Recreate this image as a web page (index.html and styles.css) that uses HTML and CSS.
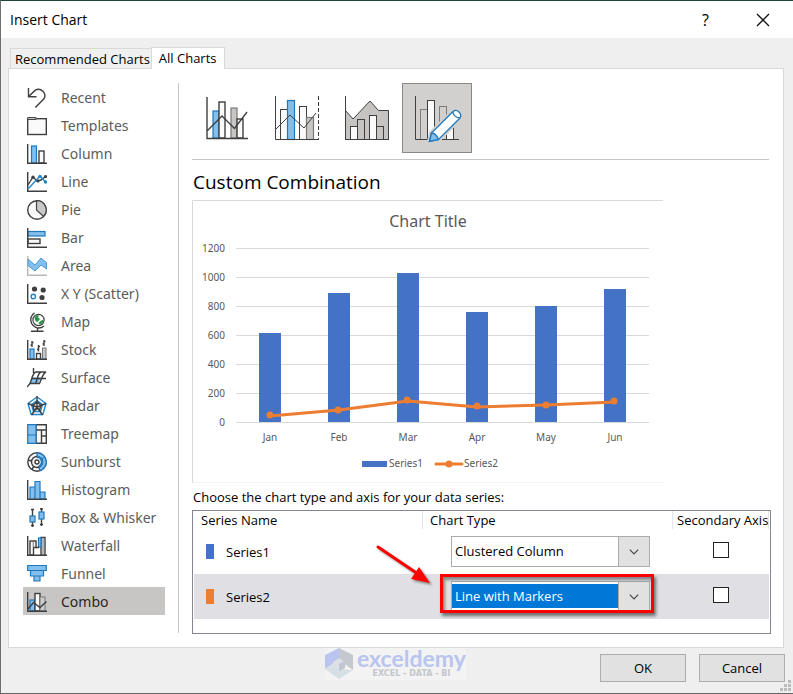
FILE: index.html
```html
<!DOCTYPE html>
<html lang="en">
<head>
  <meta charset="UTF-8">
  <meta name="viewport" content="width=device-width, initial-scale=1.0">
  <title>Insert Chart</title>
  <link rel="stylesheet" href="styles.css">
</head>
<body>

<div class="dialog">
  <header class="titlebar">
    <h1>Insert Chart</h1>
    <button class="title-button" aria-label="Help">?</button>
    <button class="title-button" aria-label="Close">
      <svg width="14" height="14" viewBox="0 0 14 14"><path d="M1 1L13 13M13 1L1 13" fill="none" stroke="#111" stroke-width="1.3"/></svg>
    </button>
  </header>

  <div class="tabs" role="tablist">
    <button class="tab" role="tab">Recommended Charts</button>
    <button class="tab tab-active" role="tab" aria-selected="true">All Charts</button>
  </div>

  <main class="panel">
    <nav class="chart-types">
      <button class="type">
        <svg class="icon" viewBox="0 0 20 20"><path class="ln" d="M1.500 0V8.800H9.500M1.700 8.600L8 2.400A6.300 6.300 0 0 1 16.800 11L8.300 19.500"/></svg>
        Recent
      </button>
      <button class="type">
        <svg class="icon" viewBox="0 0 20 20"><rect class="ln wh" x=".7" y="2.700" width="18.600" height="15.800"/><path d="M.7 1.500H9V3.500H.7z" fill="#c8c8c8" stroke="#444"/></svg>
        Templates
      </button>
      <button class="type">
        <svg class="icon" viewBox="0 0 20 20"><rect class="bl" x="4.500" y="2" width="5" height="17"/><rect class="ln wh" x="12" y="7" width="5" height="12"/><path class="ln" d="M.7 0V19.300H20"/></svg>
        Column
      </button>
      <button class="type">
        <svg class="icon" viewBox="0 0 20 20"><path class="ln" d="M.7 0V19.300H20M1 13L6 5L10 9L14 8L18.500 4.500"/><circle class="dk" cx="6" cy="5.200" r="1.700"/><circle class="dk" cx="18.500" cy="4.500" r="1.600"/><path class="bs" d="M1 17L13 4L19 10.500"/><circle class="bf" cx="13" cy="4.500" r="1.700"/><circle class="dk" cx="11" cy="9" r="1.600"/><circle class="bf" cx="18.500" cy="10" r="1.700"/></svg>
        Line
      </button>
      <button class="type">
        <svg class="icon" viewBox="0 0 20 20"><circle class="ln wh" cx="10" cy="10" r="9.300"/><path d="M9.500 .7A9.300 9.300 0 0 1 16.500 16.500L9.500 10z" fill="#c8c8c8" stroke="#444" stroke-width="1.200"/></svg>
        Pie
      </button>
      <button class="type">
        <svg class="icon" viewBox="0 0 20 20"><rect class="bl" x="1" y="3.500" width="17" height="4.500"/><rect class="ln wh" x="1" y="11" width="12" height="4.500"/><path class="ln" d="M.7 0V19.300H20"/></svg>
        Bar
      </button>
      <button class="type">
        <svg class="icon" viewBox="0 0 20 20"><path d="M.7 0V19.300H20" fill="none" stroke="#b8b8b8" stroke-width="1.400"/><path d="M1 3L8 9L14 2L19.500 6.500V13L14 9L8 15L1 9.500z" fill="#83beec" stroke="#4f9cd8"/></svg>
        Area
      </button>
      <button class="type">
        <svg class="icon" viewBox="0 0 20 20"><path class="ln" d="M.7 0V19.300H20"/><circle class="dk" cx="7.500" cy="5" r="2.600"/><circle class="dk" cx="16.200" cy="6" r="2.600"/><circle class="dk" cx="15" cy="13.500" r="2.600"/><circle cx="6.300" cy="12.500" r="2.200" fill="#fff" stroke="#1f86cc" stroke-width="1.400"/></svg>
        X Y (Scatter)
      </button>
      <button class="type">
        <svg class="icon" viewBox="0 0 20 20"><circle class="wh" cx="11.500" cy="8" r="5.600" stroke="#444" stroke-width="1.200"/><path d="M7.500 6L9 3.500L12 3L11 5.500L13 7L10.500 10L8.500 9zM13.500 9L16.500 7.500L16 10.500L13 12.800L11.500 11z" fill="#2b9148"/><path class="ln" d="M7.500 .8A8.200 8.200 0 0 0 14.500 15.500L17 14M10.500 16V19M4 19.200H16.500"/></svg>
        Map
      </button>
      <button class="type">
        <svg class="icon" viewBox="0 0 20 20"><rect class="bl" x="3" y="9" width="4" height="10"/><rect class="ln wh" x="9.500" y="13.500" width="4" height="5.500"/><rect x="15.500" y="8" width="3.500" height="11" fill="#c8c8c8" stroke="#777"/><path class="ln" d="M.7 0V19.300H20M5 1V7M5 2.500H6.500M3.500 5H5M11.500 5V11.500M11.500 6.500H13M10 9.500H11.500M17 0V6M17 1.500H18.500M15.500 4H17"/></svg>
        Stock
      </button>
      <button class="type">
        <svg class="icon" viewBox="0 0 20 20"><path d="M5 9.500H14L11 16H2z" fill="#83beec"/><path class="ln" d="M6.500 0V5M0 19L3 15.500C5 12 5 5 9 4H19C16 5 15 10 12.500 15.500H3M8.500 15.500C11 11 10 6 14 4M5 10.500H19"/></svg>
        Surface
      </button>
      <button class="type">
        <svg class="icon" viewBox="0 0 20 20"><path class="bs" d="M10 1L19 7.500L15.800 18.500H4.200L1 7.500zM10 4.500L15.500 8.500L13.500 15.500H6.500L4.500 8.500z"/><path class="ln" d="M10 0V11M10 11L19 7.500M10 11L1 7.500M10 11L4.500 19M10 11L15.500 19M10 5.500L13.800 9.200L12.500 14.500L10 12.500L7.200 15L6 9.500z"/></svg>
        Radar
      </button>
      <button class="type">
        <svg class="icon" viewBox="0 0 20 20"><path class="ln wh" d="M9 .7H19.300V19.300H9zM9 6H19M14.500 6V19M14.500 12H19"/><path class="bl" d="M.7 .7H9V19.300H.7zM.7 11H9"/></svg>
        Treemap
      </button>
      <button class="type">
        <svg class="icon" viewBox="0 0 20 20"><circle class="ln wh" cx="10" cy="10" r="9.200"/><path d="M10 .8A9.200 9.200 0 0 1 13 18.700L11.500 14.500A5 5 0 0 0 10 5z" fill="#83beec" stroke="#1f78bd" stroke-width="1.300"/><circle class="ln" cx="10" cy="10" r="5.500"/><path class="bs" d="M10 4.500A5.500 5.500 0 0 1 12 15M14.500 7L18 5"/><circle class="ln wh" cx="10" cy="10" r="2"/><path class="ln" d="M1 8L4.700 9M5 17L7 14.500"/></svg>
        Sunburst
      </button>
      <button class="type">
        <svg class="icon" viewBox="0 0 20 20"><path class="bl" d="M3 19V7H8V19M8 19V1.500H13V19M13 12H18V19H13z"/><path class="ln" d="M.7 0V19.300H20"/></svg>
        Histogram
      </button>
      <button class="type">
        <svg class="icon" viewBox="0 0 20 20"><path class="ln" d="M5.500 1V19M14.500 0V18M4 1.500H7M4 17.500H7M13 1H16M13 16.500H16"/><rect class="bl" x="3" y="8" width="5" height="6"/><rect class="bl" x="12" y="4" width="5" height="7"/></svg>
        Box &amp; Whisker
      </button>
      <button class="type">
        <svg class="icon" viewBox="0 0 20 20"><rect class="ln wh" x="3" y="5" width="3.500" height="14"/><path class="ln wh" d="M6.500 5H9V11.500H6.500M14 1.500H18V19H14z"/><rect class="bl" x="11.500" y="2" width="2.500" height="9"/><path d="M15 2H17V19H15z" fill="#b5b5b5"/><path class="ln" d="M9 11.500H12M.7 0V19.300H20"/></svg>
        Waterfall
      </button>
      <button class="type">
        <svg class="icon" viewBox="0 0 20 20"><path class="bl" d="M.7 1.500H19.300V6.500H.7zM3.500 6.500H16.500V12H3.500zM7 12H13V17H7z"/></svg>
        Funnel
      </button>
      <button class="type type-selected">
        <svg class="icon" viewBox="0 0 20 20"><rect class="bl" x="3" y="8" width="5" height="11"/><rect class="ln wh" x="8" y="1.500" width="5" height="17.500"/><rect x="13" y="5" width="5" height="14" fill="#ccc" stroke="#777"/><path class="ln" d="M.7 0V19.300H20M1 17L6.500 10.500L13 15.500L19.500 9.500"/></svg>
        Combo
      </button>
    </nav>

    <section class="details">
      <div class="subtypes">
        <button class="subtype" aria-label="Clustered Column - Line">
          <svg viewBox="0 0 70 70">
            <rect class="bl" x="21" y="28" width="6" height="27"/>
            <rect class="ln wh" x="27" y="19" width="6" height="36"/>
            <rect class="gr" x="39" y="25" width="6" height="30"/>
            <rect class="ln wh" x="45" y="36" width="6" height="19"/>
            <path class="ln" d="M15 14V55.500H56M15 48L30 33L42.500 45.500L55 29"/>
          </svg>
        </button>
        <button class="subtype" aria-label="Clustered Column - Line on Secondary Axis">
          <svg viewBox="0 0 70 70">
            <rect class="ln thin wh" x="18.500" y="26.500" width="7" height="30"/>
            <rect class="bl" x="25.500" y="17.500" width="7" height="39"/>
            <rect class="ln thin wh" x="37.500" y="23.500" width="7" height="33"/>
            <rect class="gr" x="44.500" y="34.500" width="7" height="22"/>
            <path class="ln thin" d="M13.500 13V56.500H57M14 46L28 32L42 45L54 30"/>
            <path class="ln thin" stroke-dasharray="4 2" d="M56.500 13V56"/>
          </svg>
        </button>
        <button class="subtype" aria-label="Stacked Area - Clustered Column">
          <svg viewBox="0 0 70 70">
            <path class="ln thin area" d="M13.500 27.500L21 36L38 18L46.500 27.500H56.500V56.500H13.500z"/>
            <rect class="ln thin wh" x="18.500" y="43.500" width="7" height="13"/>
            <rect class="ln thin" x="25.500" y="36.500" width="7" height="20"/>
            <rect class="ln thin wh" x="37.500" y="32.500" width="7" height="24"/>
            <rect class="ln thin" x="44.500" y="43.500" width="7" height="13"/>
            <path class="ln thin" d="M13.500 13V56.500H57"/>
          </svg>
        </button>
        <button class="subtype subtype-selected" aria-label="Custom Combination">
          <svg viewBox="0 0 70 70">
            <rect class="ln thin faded" x="18.500" y="26.500" width="7" height="30"/>
            <rect class="ln thin wh" x="25.500" y="17.500" width="7" height="39"/>
            <rect class="ln thin faded" x="37.500" y="23.500" width="7" height="33"/>
            <rect class="ln thin wh" x="44.500" y="43.500" width="7" height="13"/>
            <path class="ln thin" d="M13.500 13V56.500H57"/>
            <path d="M27.500 58.500L29.500 50L51 28.500Q54 26 57 29T58 35L36.500 56.500z" fill="#fff" stroke="#d1d0ce" stroke-width="5"/>
            <path d="M27.500 58.500L29.500 50L51 28.500Q54 26 57 29T58 35L36.500 56.500z" fill="#fff" stroke="#1f78bd" stroke-width="1.300"/>
            <path d="M27.500 58.500L29.500 50Q34 50 36.500 56.500z" fill="#83beec" stroke="#1f78bd" stroke-width="1.300"/>
            <path d="M51 28.500Q51 34 58 35" fill="none" stroke="#1f78bd" stroke-width="1.300"/>
          </svg>
        </button>
      </div>

      <h2>Custom Combination</h2>

      <svg class="preview" viewBox="0 0 471 283" role="img" aria-label="Chart Title">
        <path d="M.5 283V.5H471" fill="none" stroke="#d9d9d9"/>
        <path d="M1 282.500H471" stroke="#f4f4f4"/>
        <text class="chart-title" x="236" y="27">Chart Title</text>
        <path d="M44 48.500H457M44 77.500H457M44 106.500H457M44 135.500H457M44 164.500H457M44 193.500H457M44 222.500H457" stroke="#d9d9d9"/>
        <g class="y-labels">
          <text x="33" y="52">1200</text>
          <text x="33" y="81">1000</text>
          <text x="33" y="110">800</text>
          <text x="33" y="139">600</text>
          <text x="33" y="168">400</text>
          <text x="33" y="197">200</text>
          <text x="33" y="226">0</text>
        </g>
        <g fill="#4472c4">
          <rect x="67" y="133" width="22" height="89"/>
          <rect x="136" y="93" width="22" height="129"/>
          <rect x="205" y="73" width="22" height="149"/>
          <rect x="274" y="112" width="22" height="110"/>
          <rect x="343" y="106" width="22" height="116"/>
          <rect x="412" y="89" width="22" height="133"/>
        </g>
        <polyline points="78,216 147,210 216,201 285,207 354,205 423,202" fill="none" stroke="#ed7d31" stroke-width="3"/>
        <g fill="#ed7d31">
          <circle cx="78" cy="215" r="3.500"/>
          <circle cx="146" cy="210" r="3.500"/>
          <circle cx="215" cy="200" r="3.500"/>
          <circle cx="285" cy="206" r="3.500"/>
          <circle cx="354" cy="205" r="3.500"/>
          <circle cx="422" cy="201" r="3.500"/>
        </g>
        <g class="x-labels">
          <text x="78" y="241">Jan</text>
          <text x="147" y="241">Feb</text>
          <text x="216" y="241">Mar</text>
          <text x="285" y="241">Apr</text>
          <text x="354" y="241">May</text>
          <text x="423" y="241">Jun</text>
        </g>
        <rect x="170" y="261" width="25" height="6" fill="#4472c4"/>
        <text x="197" y="267">Series1</text>
        <path d="M244 264H270" stroke="#ed7d31" stroke-width="3" stroke-linecap="round"/>
        <circle cx="257" cy="264" r="3.500" fill="#ed7d31"/>
        <text x="272" y="267">Series2</text>
      </svg>

      <p class="hint">Choose the chart type and axis for your data series:</p>

      <div class="series-box">
        <table class="series">
          <thead>
            <tr><th class="col-name">Series Name</th><th class="col-type">Chart Type</th><th class="col-axis">Secondary Axis</th></tr>
          </thead>
          <tbody>
            <tr>
              <td><span class="swatch swatch-blue"></span>Series1</td>
              <td>
                <div class="combo">
                  <select aria-label="Chart type for Series1"><option>Clustered Column</option><option>Line with Markers</option></select>
                  <svg class="chevron" viewBox="0 0 32 31"><path d="M11.500 13.500L16 18L20.500 13.500"/></svg>
                </div>
              </td>
              <td class="axis"><input type="checkbox" aria-label="Secondary axis for Series1"></td>
            </tr>
            <tr class="row-selected">
              <td><span class="swatch swatch-orange"></span>Series2</td>
              <td>
                <div class="combo combo-active">
                  <select aria-label="Chart type for Series2"><option>Line with Markers</option><option>Clustered Column</option></select>
                  <svg class="chevron" viewBox="0 0 32 31"><path d="M11.500 13.500L16 18L20.500 13.500"/></svg>
                  <span class="highlight"></span>
                  <svg class="pointer" viewBox="0 0 60 44"><path d="M3 4L43 31" stroke="#f00" stroke-width="3" stroke-linecap="round"/><path d="M55 40L36 36L44 24z" fill="#f00"/></svg>
                </div>
              </td>
              <td class="axis"><input type="checkbox" aria-label="Secondary axis for Series2"></td>
            </tr>
          </tbody>
        </table>
      </div>
    </section>
  </main>

  <footer class="actions">
    <div class="brand">
      <svg class="brand-mark" viewBox="0 0 28 32">
        <path d="M14 0L0 7V21L14 12z" fill="#b9c5ee"/>
        <path d="M14 0L28 7V22L14 12z" fill="#c3c9cf"/>
        <path d="M0 21L9 16L14 21L28 22L14 31z" fill="#d5dfe4"/>
        <path d="M8 14L14 10L20 14V19L14 22L8 19z" fill="#dcdfe4"/>
        <path d="M14 16L20 13V20L14 23z" fill="#c0c5d2"/>
      </svg>
      <div class="brand-text">
        <span class="brand-name">exceldemy</span>
        <span class="brand-tag">EXCEL - DATA - BI</span>
      </div>
    </div>
    <button class="button">OK</button>
    <button class="button">Cancel</button>
    <svg class="grip" viewBox="0 0 11 11"><path d="M8 0h3v3h-3zM4 4h3v3h-3zM8 4h3v3h-3zM0 8h3v3h-3zM4 8h3v3h-3zM8 8h3v3h-3z" fill="#bcbcbc"/></svg>
  </footer>
</div>

</body>
</html>
```
FILE: styles.css
```css
* {
  box-sizing: border-box;
  margin: 0;
  padding: 0;
}
body {
  font-family: "Open Sans", "Noto Sans", sans-serif;
  font-size: 13px;
  line-height: 18px;
  color: #000;
  background: #c8c8c8;
  padding-bottom: 1px;
}
button, select {
  font: inherit;
  color: inherit;
}
.dialog {
  display: flex;
  flex-direction: column;
  min-height: calc(100vh - 1px);
  background: #efefef;
  border-top: 1px solid #1e4434;
  border-left: 1px solid #6d706e;
  border-bottom: 1px solid #666;
}

/* title bar */
.titlebar {
  display: flex;
  align-items: center;
  height: 37px;
  padding: 0 2px 0 9px;
  background: #fff;
}
.titlebar h1 {
  flex: 1;
  font-size: 14px;
  font-weight: 400;
}
.title-button {
  width: 57px;
  height: 36px;
  border: none;
  background: none;
  font-size: 16px;
}
.title-button svg {
  display: block;
  margin: 0 auto;
}

/* tabs */
.tabs {
  display: flex;
  align-items: flex-end;
  padding: 9px 9px 0;
}
.tab {
  height: 20px;
  padding: 1px 1px 0 4px;
  border: 1px solid #d9d9d9;
  border-width: 1px 0 0 1px;
  background: #f0f0f0;
}
.tab-active {
  position: relative;
  height: 22px;
  padding: 0 7px 2px;
  margin-bottom: -1px;
  border-width: 1px 1px 0;
  background: #fff;
}
.panel {
  flex: 1;
  display: flex;
  margin: 0 9px 0 7px;
  padding: 14px 12px 13px 14px;
  border: 1px solid #d9d9d9;
  background: #fff;
}

/* chart type list */
.chart-types {
  flex: none;
  width: 156px;
  margin-bottom: 1px;
  border-right: 1px solid #c6c6c6;
}
.type {
  display: flex;
  align-items: center;
  gap: 14px;
  width: 142px;
  height: 28px;
  padding: 1px 4px 0;
  border: none;
  background: none;
  color: #5c5c5c;
  font-family: "Noto Sans", "Open Sans", sans-serif;
  font-size: 14px;
  white-space: nowrap;
}
.type-selected {
  background: #c8c6c4;
  color: #262626;
}
.icon {
  flex: none;
  width: 20px;
  height: 20px;
}
.ln {
  fill: none;
  stroke: #3f3f3f;
  stroke-width: 1.4;
}
.thin {
  stroke-width: 1;
}
.wh {
  fill: #fafafa;
}
.area {
  fill: #c5c4c2;
}
.dk {
  fill: #3f3f3f;
}
.bl {
  fill: #83beec;
  stroke: #1f78bd;
  stroke-width: 1.2;
}
.gr {
  fill: #c8c6c4;
  stroke: #7a7a7a;
  stroke-width: 1.2;
}
.bs {
  fill: none;
  stroke: #1f86cc;
  stroke-width: 1.4;
}
.bf {
  fill: #1f86cc;
}
.faded {
  stroke: #7d7d7d;
}

/* right side */
.details {
  flex: 1;
  min-width: 0;
  margin-left: 13px;
}
.subtypes {
  display: flex;
  padding-bottom: 6px;
  margin-right: 2px;
  border-bottom: 1px solid #c6c6c6;
}
.subtype {
  width: 70px;
  height: 70px;
  border: none;
  background: none;
}
.subtype svg {
  display: block;
  width: 70px;
  height: 70px;
}
.subtype-selected {
  background: #d1d0ce;
  outline: 1px solid #8a8886;
  outline-offset: -1px;
}
h2 {
  padding: 10px 0 6px 1px;
  font-size: 19px;
  line-height: 24px;
  font-weight: 400;
}
.preview {
  display: block;
  width: 100%;
  max-width: 471px;
}
.preview text {
  fill: #595959;
  font-family: "Noto Sans", "Open Sans", sans-serif;
  font-size: 10px;
}
.preview .chart-title {
  font-size: 16px;
  text-anchor: middle;
}
.y-labels {
  text-anchor: end;
}
.x-labels {
  text-anchor: middle;
}
.hint {
  padding: 5px 0 4px 1px;
}

/* series table */
.series-box {
  height: 124px;
  padding: 0 1px;
  border: 1px solid #828790;
}
.series {
  width: 100%;
  border-spacing: 0;
  table-layout: fixed;
}
.series th {
  height: 18px;
  font-weight: 400;
  text-align: left;
  padding-left: 7px;
  border-right: 1px solid #e5e5e5;
  white-space: nowrap;
}
.series td {
  height: 45px;
  padding-left: 12px;
}
.series .col-name {
  width: 229px;
}
.series .col-type {
  width: 250px;
}
.series .col-axis {
  padding-left: 4px;
}
.series td:nth-child(2) {
  padding-left: 28px;
}
.series .axis {
  padding: 0 0 3px;
}
.row-selected {
  background: #e0dfe4;
}
.swatch {
  display: inline-block;
  width: 8px;
  height: 15px;
  margin-right: 12px;
  vertical-align: -2px;
}
.swatch-blue {
  background: #4472c4;
}
.swatch-orange {
  background: #ed7d31;
}
.combo {
  position: relative;
  width: 199px;
  height: 31px;
}
.combo select {
  width: 100%;
  height: 31px;
  padding: 0 0 1px 3px;
  border: 1px solid #ababab;
  border-radius: 0;
  background: #fff;
  appearance: none;
}
.combo-active select {
  color: #fff;
  background: linear-gradient(#0078d7, #0078d7) 0 2px / 100% 24px no-repeat #fff;
}
.chevron {
  position: absolute;
  top: 0;
  right: 0;
  width: 32px;
  height: 31px;
  border: 1px solid #ababab;
  background: #e1e1e1;
  pointer-events: none;
}
.chevron path {
  fill: none;
  stroke: #444;
  stroke-width: 1.2;
}
.highlight {
  position: absolute;
  inset: -7px -4px -1px -11px;
  border: 3px solid #f00;
  box-shadow: 2px 3px 3px rgba(0, 0, 0, 0.5), inset 2px 3px 3px rgba(0, 0, 0, 0.4);
  pointer-events: none;
}
.pointer {
  position: absolute;
  top: -38px;
  left: -76px;
  width: 60px;
  height: 44px;
  filter: drop-shadow(2px 2px 1px rgba(0, 0, 0, 0.4));
  pointer-events: none;
}
.axis input {
  display: block;
  width: 16px;
  height: 16px;
  margin: 0 auto;
  border: 1px solid #222;
  background: #fff;
  appearance: none;
}
.axis input:checked {
  background: #0078d7;
}

/* bottom bar */
.actions {
  position: relative;
  display: flex;
  align-items: flex-start;
  gap: 13px;
  height: 45px;
  padding-right: 8px;
}
.brand {
  display: flex;
  align-items: center;
  gap: 4px;
  height: 32px;
  margin: 0 auto 0 324px;
  background: #f3f3f3;
}
.brand-mark {
  width: 28px;
  height: 32px;
}
.brand-text {
  display: flex;
  flex-direction: column;
  align-items: center;
}
.brand-name {
  color: #b9c5ee;
  font-family: Lato, sans-serif;
  font-size: 23px;
  font-weight: 700;
  line-height: 20px;
}
.brand-tag {
  color: #c3c6cb;
  font-family: "DejaVu Sans", sans-serif;
  font-size: 8px;
  font-weight: 700;
  line-height: 12px;
}
.button {
  width: 86px;
  height: 28px;
  margin-top: 6px;
  border: 1px solid #adadad;
  background: #e1e1e1;
}
.grip {
  position: absolute;
  right: 2px;
  bottom: 2px;
  width: 11px;
  height: 11px;
}
```
